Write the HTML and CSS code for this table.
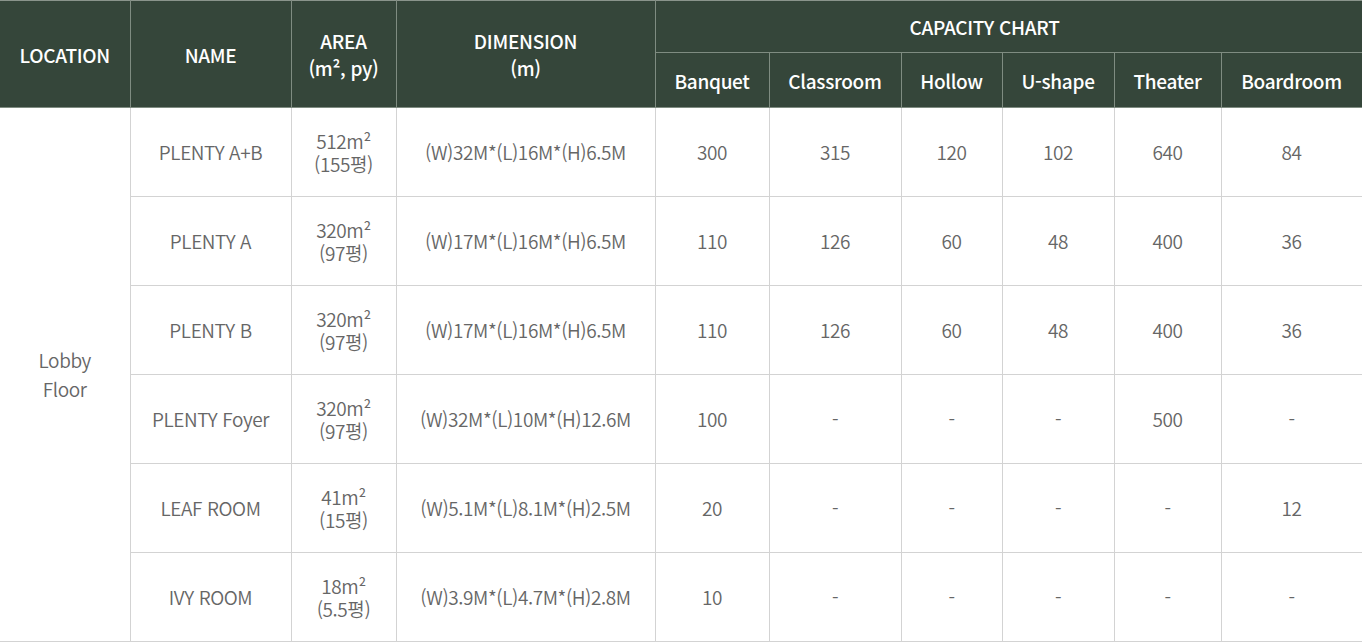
FILE: index.html
```html
<!DOCTYPE html>
<html lang="ko">
<head>
<meta charset="utf-8">
<link rel="stylesheet" href="styles.css">
</head>
<body>
<table class="cap">
  <colgroup>
    <col class="c-loc"><col class="c-name"><col class="c-area"><col class="c-dim">
    <col class="c-ban"><col class="c-cls"><col class="c-hol"><col class="c-ush"><col class="c-the"><col class="c-brd">
  </colgroup>
  <thead>
    <tr class="h1">
      <th rowspan="2">LOCATION</th>
      <th rowspan="2">NAME</th>
      <th rowspan="2" class="two">AREA<br>(m², py)</th>
      <th rowspan="2" class="two">DIMENSION<br>(m)</th>
      <th colspan="6" class="chart">CAPACITY CHART</th>
    </tr>
    <tr class="h2">
      <th>Banquet</th><th>Classroom</th><th>Hollow</th><th>U-shape</th><th>Theater</th><th>Boardroom</th>
    </tr>
  </thead>
  <tbody>
    <tr>
      <td rowspan="6" class="loc">Lobby<br>Floor</td>
      <td>PLENTY A+B</td><td class="area">512m²<br>(155평)</td><td>(W)32M*(L)16M*(H)6.5M</td>
      <td>300</td><td>315</td><td>120</td><td>102</td><td>640</td><td>84</td>
    </tr>
    <tr>
      <td>PLENTY A</td><td class="area">320m²<br>(97평)</td><td>(W)17M*(L)16M*(H)6.5M</td>
      <td>110</td><td>126</td><td>60</td><td>48</td><td>400</td><td>36</td>
    </tr>
    <tr>
      <td>PLENTY B</td><td class="area">320m²<br>(97평)</td><td>(W)17M*(L)16M*(H)6.5M</td>
      <td>110</td><td>126</td><td>60</td><td>48</td><td>400</td><td>36</td>
    </tr>
    <tr>
      <td>PLENTY Foyer</td><td class="area">320m²<br>(97평)</td><td>(W)32M*(L)10M*(H)12.6M</td>
      <td>100</td><td>-</td><td>-</td><td>-</td><td>500</td><td>-</td>
    </tr>
    <tr>
      <td>LEAF ROOM</td><td class="area">41m²<br>(15평)</td><td>(W)5.1M*(L)8.1M*(H)2.5M</td>
      <td>20</td><td>-</td><td>-</td><td>-</td><td>-</td><td>12</td>
    </tr>
    <tr>
      <td>IVY ROOM</td><td class="area">18m²<br>(5.5평)</td><td>(W)3.9M*(L)4.7M*(H)2.8M</td>
      <td>10</td><td>-</td><td>-</td><td>-</td><td>-</td><td>-</td>
    </tr>
  </tbody>
</table>
</body>
</html>
```
FILE: styles.css
```css
html, body {
  margin: 0;
  padding: 0;
  background: #fff;
}
body {
  font-family: "Noto Sans CJK KR", "Noto Sans", sans-serif;
}
.cap {
  width: 1362px;
  border-collapse: collapse;
  table-layout: fixed;
}
.c-loc { width: 130px; }
.c-name { width: 161px; }
.c-area { width: 105px; }
.c-dim { width: 259px; }
.c-ban { width: 114px; }
.c-cls { width: 132px; }
.c-hol { width: 101px; }
.c-ush { width: 112px; }
.c-the { width: 107px; }
.c-brd { width: 141px; }

.cap th {
  background: #35463a;
  color: #fff;
  font-weight: 500;
  font-size: 19px;
  letter-spacing: -0.3px;
  line-height: 27px;
  padding: 0;
  border: 1px solid #7f8c81;
  text-align: center;
  vertical-align: middle;
}
.cap thead tr:first-child th { border-top: 1px solid #8a948b; }
.cap th:first-child { border-left: 0; }
.cap th.chart { padding-right: 48px; }
.h1 { height: 52px; }
.h2 { height: 55px; }

.cap td {
  height: 86px;
  padding: 0 0 2px;
  border: 1px solid #d3d3d3;
  color: #666;
  font-size: 19px;
  font-weight: 350;
  letter-spacing: -0.4px;
  line-height: 23px;
  text-align: center;
  vertical-align: middle;
}
.cap td.area { padding-bottom: 1px; }
.cap td.loc { border-left: 0; line-height: 29px; }
```
